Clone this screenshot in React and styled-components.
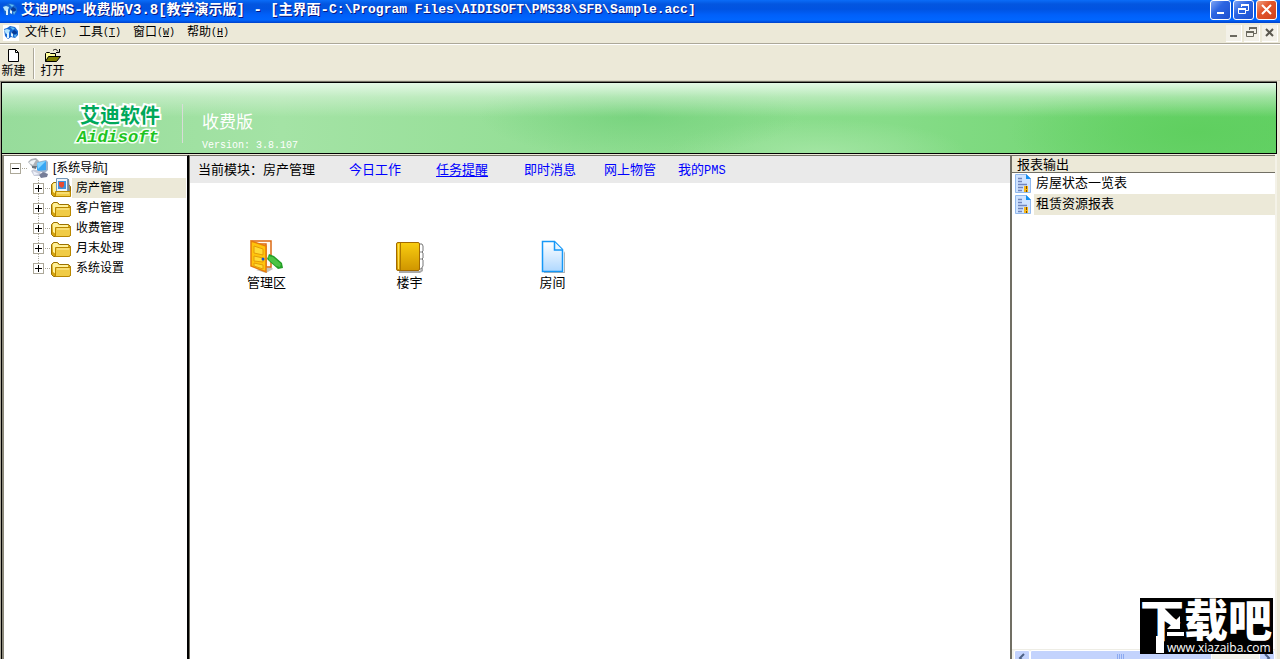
import React from "react";
import styled, { createGlobalStyle } from "styled-components";

const cjk = `"Noto Sans CJK SC", sans-serif`;

const GlobalStyle = createGlobalStyle`
  * { box-sizing: border-box; }
  body {
    margin: 0;
    background: #ece9d8;
    color: #000;
    font: 13px/16px "Liberation Mono", ${cjk};
    overflow: hidden;
  }
  button { font: inherit; color: inherit; border: 0; padding: 0; background: none; white-space: nowrap; }
  ul { list-style: none; margin: 0; padding: 0; }
  svg { display: block; flex: none; }
`;

const Window = styled.div`
  display: flex;
  flex-direction: column;
  height: 100vh;
`;

const TitleBar = styled.header`
  display: flex;
  align-items: center;
  flex: none;
  height: 23px;
  padding: 0 3px 4px 2px;
  background: linear-gradient(#0a6cf8 0, #0356e0 4px, #0053e1 9px, #0060fa 15px, #0066ff 20px, #0040c8 23px);
`;

const Title = styled.h1`
  display: flex;
  flex: 1;
  margin: 0 0 0 3px;
  font-size: 14px;
  line-height: 18px;
  font-weight: 700;
  color: #fff;
  white-space: pre;
  text-shadow: 1px 1px 0 #0a1883;
`;

const FilePath = styled.span`
  font-size: 13px;
`;

const WindowButtons = styled.div`
  display: flex;
  gap: 2px;
`;

const CaptionButton = styled.button`
  display: grid;
  place-items: center;
  width: 21px;
  height: 20px;
  border: 1px solid #fff;
  border-radius: 3px;
  background: ${(p) =>
    p.$close
      ? "linear-gradient(135deg, #f0a080, #e2552c 40%, #d0421c)"
      : "linear-gradient(135deg, #7fa5f5, #2d66e2 40%, #1c50d0)"};
`;

const MdiButton = styled.button`
  display: grid;
  place-items: center;
  width: 16px;
  height: 17px;
  background: #f3f1e8;
  border-right: 1px solid #fff;
  border-bottom: 1px solid #fff;
`;

const MenuBar = styled.nav`
  display: flex;
  align-items: center;
  flex: none;
  height: 21px;
  padding: 0 2px 0 3px;
  border-bottom: 1px solid #aca899;
`;

const MenuItems = styled.div`
  display: flex;
  flex: 1;
  gap: 12px;
  padding-left: 6px;
`;

const MenuButton = styled.button`
  display: flex;
  align-items: center;
  width: 42px;
  font-size: 12px;
`;

const Mnemonic = styled.span`
  font-size: 10px;
`;

const Toolbar = styled.div`
  display: flex;
  flex: none;
  height: 37px;
  padding-top: 3px;
  border-top: 1px solid #fff;
  border-bottom: 1px solid #d8d5c4;
`;

const ToolButton = styled.button`
  display: flex;
  flex-direction: column;
  align-items: center;
  gap: 2px;
  width: 27px;
  height: 32px;
  font-size: 12px;
  line-height: 14px;
`;

const ToolDivider = styled.div`
  width: 2px;
  height: 31px;
  margin: 0 4px 0 6px;
  border-left: 1px solid #aca899;
  border-right: 1px solid #fff;
`;

const Client = styled.div`
  display: flex;
  flex-direction: column;
  flex: 1;
  min-height: 0;
  margin-right: 3px;
  border-top: 1px solid #716f64;
  border-left: 1px solid #aca899;
`;

const Banner = styled.section`
  display: flex;
  align-items: flex-start;
  flex: none;
  height: 72px;
  border: 1px solid #000;
  background:
    linear-gradient(rgba(232, 250, 234, 0.95), rgba(225, 246, 225, 0.5) 14px, rgba(220, 244, 220, 0) 34px),
    radial-gradient(ellipse 190px 60px at 94% 70%, #5fcf5f, rgba(95, 207, 95, 0)),
    radial-gradient(ellipse 160px 44px at 50% 45%, rgba(112, 208, 120, 0.75), rgba(112, 208, 120, 0)),
    radial-gradient(ellipse 150px 34px at 64% 100%, rgba(165, 230, 165, 0.9), rgba(165, 230, 165, 0)),
    linear-gradient(90deg, #97dc9b, #a4e3a5 22%, #92de94 45%, #86dc88 70%, #6fd570 90%, #64d166);
`;

const Brand = styled.div`
  width: 181px;
  height: 39px;
  margin-top: 21px;
  padding-left: 75px;
  border-right: 1px solid #d8dcd8;
  white-space: nowrap;
`;

const BrandName = styled.div`
  padding-left: 3px;
  font: 700 20px/22px ${cjk};
  color: #00a85a;
  -webkit-text-stroke: 4px #fff;
  paint-order: stroke fill;
`;

const BrandLatin = styled.div`
  margin-top: 1px;
  font: italic 700 17px/22px "Liberation Mono", monospace;
  color: #1fc41f;
  -webkit-text-stroke: 3px #f4fff4;
  paint-order: stroke fill;
`;

const Edition = styled.div`
  padding: 27px 0 0 19px;
  color: #fff;
  font: 400 17px/22px ${cjk};
`;

const Version = styled.div`
  margin-top: 8px;
  font: 10px/12px "Liberation Mono", monospace;
`;

const Workspace = styled.div`
  display: flex;
  flex: 1;
  min-height: 0;
  background: #ece9d8;
  border-left: 1px solid #000;
`;

const Panel = styled.div`
  display: flex;
  flex-direction: column;
  min-width: 0;
  margin-top: 1px;
  background: #fff;
  border-top: 1px solid #716f64;
  border-left: 2px solid #716f64;
`;

const TreePanel = styled(Panel)`
  flex: 0 0 187px;
  padding: 2px 1px 0 0;
  border-left-color: #8b887a;
  border-right: 2px solid #000;
`;

const MainPanel = styled(Panel)`
  flex: 1;
  border-left-width: 1px;
`;

const ReportPanel = styled(Panel)`
  flex: 0 0 265px;
`;

const RightEdge = styled.div`
  width: 2px;
  background: #f4f2e8;
`;

const TreeRow = styled.div`
  display: flex;
  align-items: center;
  height: 20px;
  padding-left: ${(p) => p.$indent}px;
`;

const TreeChildren = styled.ul`
  background: repeating-linear-gradient(#aca899 0 1px, #fff 1px 2px) 34px 0 / 1px calc(100% - 12px) no-repeat;
`;

const Expander = styled.button`
  width: 11px;
  height: 11px;
  border: 1px solid #aca899;
  background: #fff;
  display: grid;
  place-items: center;
`;

const Dots = styled.span`
  width: 7px;
  height: 1px;
  background: repeating-linear-gradient(90deg, #fff 0 1px, #aca899 1px 2px);
`;

const TreeLabel = styled.button`
  flex: 1;
  height: 20px;
  padding-left: 4px;
  text-align: left;
  font: 12px/20px "Liberation Sans", ${cjk};
  background: ${(p) => (p.$selected ? "#ece9d8" : "transparent")};
`;

const ModuleBar = styled.nav`
  display: flex;
  align-items: center;
  height: 27px;
  padding: 2px 0 0 8px;
  background: #eaeaea;
  white-space: nowrap;
`;

const ModuleLink = styled.a`
  margin-left: ${(p) => p.$gap}px;
  display: flex;
  align-items: center;
  color: #00f;
  text-decoration: ${(p) => (p.$active ? "underline" : "none")};
  text-underline-offset: 2px;
`;

const Small = styled.span`
  font-size: 12px;
`;

const Shortcuts = styled.div`
  display: grid;
  grid-template-columns: repeat(auto-fill, 143px);
  padding: 57px 0 0 5px;
`;

const Shortcut = styled.button`
  display: flex;
  flex-direction: column;
  align-items: center;
  gap: 2px;
`;

const ReportHeader = styled.h2`
  margin: 0;
  height: 17px;
  padding-left: 5px;
  font: 13px/16px ${cjk};
  background: #ece9d8;
  border-bottom: 1px solid #716f64;
`;

const ReportRow = styled.li`
  display: flex;
  align-items: center;
  height: 21px;
  padding-left: 3px;
  gap: 3px;
`;

const ReportButton = styled.button`
  flex: 1;
  height: 21px;
  padding-left: 2px;
  text-align: left;
  background: ${(p) => (p.$selected ? "#ece9d8" : "transparent")};
`;

const ScrollBar = styled.div`
  display: flex;
  height: 10px;
  margin-top: auto;
  padding-left: 2px;
  overflow: hidden;
  background: #f3f3ec;
  border-top: 1px solid #eeede5;
`;

const ScrollArrow = styled.button`
  width: 16px;
  height: 16px;
  display: grid;
  place-items: center;
  border: 1px solid #fff;
  border-radius: 2px;
  background: #c3d3fd;
`;

const ScrollThumb = styled.div`
  flex: 0 0 182px;
  height: 16px;
  display: grid;
  place-items: center;
  border: 1px solid #fff;
  border-radius: 2px;
  background: #c3d3fd;
`;

const ScrollTrack = styled.div`
  flex: 1;
`;

const WatermarkBox = styled.aside`
  position: fixed;
  right: 7px;
  bottom: 5px;
  width: 133px;
  height: 56px;
  background: #000;
`;

function Globe({ boxed }) {
  return (
    <svg width="16" height="16" viewBox="0 0 16 16" aria-hidden="true">
      {boxed && <rect width="16" height="16" fill="#fff" />}
      <path d="M1 4 4 3l3-2 5 1 3 4v4l-3 3-4-1-3 2-3-3z" fill="#1769d2" />
      <path d="M1 5 4 4l3 1-1 3-3 1-1-2z" fill="#b4e5ff" />
      <path d="M4 8h2v5H4zM8 7l2 1v4L8 11z" fill="#dff4ff" />
      <path d="m8 8 3-3 3 2-1 3-2-1z" fill="#073b96" />
      <path d="m7 2 5 1-2 2z" fill="#62c0f6" />
      <path d="m11 10 3-1-2 4z" fill="#5db4ef" />
    </svg>
  );
}

function WindowGlyph({ kind, color }) {
  return (
    <svg width="13" height="13" viewBox="0 0 13 13" fill="none" stroke={color} aria-hidden="true">
      {kind === "min" && <path d="M3 10h7" strokeWidth="2" />}
      {kind === "restore" && (
        <g>
          <path d="M4.500 4V2.500h7v5H9" />
          <path d="M4 2h8" strokeWidth="2" />
          <path d="M1.500 5.500h7v5h-7z" />
          <path d="M1 6h8" strokeWidth="2" />
        </g>
      )}
      {kind === "close" && <path d="m2 2 9 9M11 2l-9 9" strokeWidth="2" />}
      {kind === "closeSmall" && <path d="m3 3 7 7M10 3l-7 7" strokeWidth="2" />}
    </svg>
  );
}

function NewIcon() {
  return (
    <svg width="16" height="15" viewBox="0 0 16 15" aria-hidden="true">
      <path d="M2.500 1.500h7l3 3v9h-10z" fill="#fff" stroke="#000" />
      <path d="M9.500 1.500v3h3" fill="none" stroke="#000" />
    </svg>
  );
}

function OpenIcon() {
  return (
    <svg width="17" height="15" viewBox="0 0 17 15" aria-hidden="true">
      <path d="M1.500 13.500v-8l1-1h3l1 1h5v3" fill="#ffff9c" stroke="#000" />
      <path d="m1.500 13.500 3-5h12l-4 5z" fill="#808000" stroke="#000" />
      <path d="M9 2.500c2-2 4-1 5 1M15.500 1v3.500H12" fill="none" stroke="#000" />
    </svg>
  );
}

function NetworkIcon() {
  return (
    <svg width="21" height="20" viewBox="0 0 21 20" aria-hidden="true">
      <path d="M0 4 3 1l5-1 3 3v5l-6 2z" fill="#aeb3b9" />
      <path d="M1 5c2-3 4-3 7-3L5 7z" fill="#f1f4f7" />
      <path d="M4 8h5l-1 3-4-1z" fill="#6c747e" />
      <path d="M9 4 18 2l2 2v8l-3 3-8-2z" fill="#9fb2c9" />
      <path d="m9 5 9-2v9l-9 1z" fill="#38a7f4" />
      <path d="m9 5 9-2-8 8z" fill="#85d5ff" />
      <path d="M3 13c3-3 7-1 10 2l-2 3H6z" fill="#c8ccda" />
      <path d="m11 17 4-3 5 2-1 3-6 1z" fill="#777e98" />
      <path d="m5 13 6 3-5 1z" fill="#eff2fb" />
    </svg>
  );
}

function FolderIcon({ photo }) {
  return (
    <svg width="21" height="20" viewBox="0 0 21 20" aria-hidden="true">
      <path d="M.5 6.500 2.500 4.500h4l2 2h9l2 2v9l-2 1h-15l-2-2z" fill="#d5a30d" stroke="#9b7100" />
      <path d="M1.500 6.500 3 5h3l2 2h9v2h-12v7l-3-2z" fill="#fff19a" />
      {photo && (
        <g>
          <path d="M6 1h12l1 12H6z" fill="#7d8793" />
          <path d="M5.500.500h11v13h-11z" fill="#edf5fc" stroke="#7798b9" />
          <path d="M7 3h8v8H7z" fill="#3d91de" />
          <path d="M8 4h5v4l-2 2-3-2z" fill="#e84b31" />
        </g>
      )}
      <path d={photo ? "M4.500 13.500h15v5h-15z" : "M4.500 9.500h15v8l-2 1h-13z"} fill="#f0cb45" stroke="#b98700" />
      <path d={photo ? "M6 15h12" : "M6 11h12"} stroke="#ffef9f" />
    </svg>
  );
}

function DoorIcon() {
  return (
    <svg width="34" height="34" viewBox="0 0 34 34" aria-hidden="true">
      <path d="m6 30 15-3 2 2-7 4z" fill="#c5c2bd" />
      <path d="M2 1h19v26h-5V4H2z" fill="#fff8ef" stroke="#dc6915" strokeWidth="1.500" />
      <path d="m1 1 15 5v26L1 26z" fill="#ffc40b" stroke="#e57b0d" strokeWidth="1.500" />
      <path d="m4 6 9 3v6l-9-2zM4 16l9 2v4l-9-1zM4 23l9 2v4l-9-3z" fill="#ffdb35" stroke="#e49b08" />
      <circle cx="13" cy="19" r="1.500" fill="#1753d2" />
      <path d="m17 19 2-5 5 2 8 7 1 5-5 1-8-7z" fill="#239e27" />
      <path d="m18 16 5 1 8 7-1 3-4-1-7-6z" fill="#4cc445" />
    </svg>
  );
}

function BookIcon() {
  return (
    <svg width="30" height="34" viewBox="0 0 30 34" aria-hidden="true">
      <defs>
        <linearGradient id="cover" x2="0" y2="1">
          <stop stopColor="#f9cd10" />
          <stop offset="1" stopColor="#cf9500" />
        </linearGradient>
      </defs>
      <path d="M4 31h21l3-4v4l-3 2H4z" fill="#aaa" />
      <path d="M23 4h4l1 2v5l-1 1 1 1v5l-1 1 1 1v6l-2 3h-3z" fill="#fff" stroke="#777" />
      <path d="M23 12h4M23 19h4" stroke="#888" />
      <rect x="1.500" y="2.500" width="23" height="28" rx="1.500" fill="url(#cover)" stroke="#a36a00" />
      <path d="M5.500 3v27" stroke="#ad7800" />
      <path d="M3.500 4v25" stroke="#ffdf54" />
    </svg>
  );
}

function PageIcon() {
  return (
    <svg width="26" height="34" viewBox="0 0 26 34" aria-hidden="true">
      <defs>
        <linearGradient id="sheet" x2="0" y2="1">
          <stop stopColor="#fff" />
          <stop offset="1" stopColor="#afd8ff" />
        </linearGradient>
      </defs>
      <path d="M4 32h20V11l1 2v20H4z" fill="#b5b5b5" />
      <path d="M2.500 1.500h12l8 8v22h-20z" fill="url(#sheet)" stroke="#1698f7" strokeWidth="1.500" />
      <path d="M14.500 2v8h8" fill="#e7f5ff" stroke="#1698f7" strokeWidth="1.500" />
    </svg>
  );
}

function ReportIcon() {
  return (
    <svg width="16" height="20" viewBox="0 0 16 20" aria-hidden="true">
      <path d="M.5.500h11l4 4v14H.5z" fill="#cfe3ff" stroke="#91b9ee" />
      <path d="M11 0v5h5z" fill="#1591f2" />
      <path d="M3 4.500h4M3 7.500h4M3 10.500h9M3 13.500h5M3 16.500h4" stroke="#7185bd" strokeWidth="1.500" />
      <path d="M9 12h4v6H9z" fill="#f8b91b" />
      <path d="M11.500 12v3M11.500 16v2" stroke="#784b00" />
    </svg>
  );
}

function Watermark() {
  return (
    <WatermarkBox>
      <svg width="133" height="56" viewBox="0 0 133 56">
        <g fill="#fff">
          <text x="0" y="39" fontSize="44" fontWeight="900" fontFamily='"Noto Sans CJK SC", sans-serif'>
            下载吧
          </text>
          <path d="M16 38h8v17h-8z" />
          <path d="m24 10 12 12 4-4v13H27l4-4-8-12z" />
          <path d="M27 34h17v4H27z" />
          <text x="27" y="54" fontSize="12" fontFamily='"Open Sans", sans-serif'>
            www.xiazaiba.com
          </text>
        </g>
      </svg>
    </WatermarkBox>
  );
}

const menus = [
  ["文件", "F"],
  ["工具", "T"],
  ["窗口", "W"],
  ["帮助", "H"],
];

const modules = ["房产管理", "客户管理", "收费管理", "月末处理", "系统设置"];

const links = [
  { label: "今日工作", gap: 34 },
  { label: "任务提醒", gap: 35, active: true },
  { label: "即时消息", gap: 36 },
  { label: "网上物管", gap: 28 },
  { label: "我的", latin: "PMS", gap: 22 },
];

const shortcuts = [
  ["管理区", DoorIcon],
  ["楼宇", BookIcon],
  ["房间", PageIcon],
];

const reports = ["房屋状态一览表", "租赁资源报表"];

export default function App() {
  return (
    <Window>
      <GlobalStyle />
      <TitleBar>
        <Globe />
        <Title>
          艾迪PMS-收费版V3.8[教学演示版] - [主界面-
          <FilePath>{"C:\\Program Files\\AIDISOFT\\PMS38\\SFB\\Sample.acc]"}</FilePath>
        </Title>
        <WindowButtons>
          <CaptionButton aria-label="最小化"><WindowGlyph kind="min" color="#fff" /></CaptionButton>
          <CaptionButton aria-label="还原"><WindowGlyph kind="restore" color="#fff" /></CaptionButton>
          <CaptionButton $close aria-label="关闭"><WindowGlyph kind="close" color="#fff" /></CaptionButton>
        </WindowButtons>
      </TitleBar>
      <MenuBar>
        <Globe boxed />
        <MenuItems>
          {menus.map(([label, key]) => (
            <MenuButton key={key}>
              {label}
              <Mnemonic>(<u>{key}</u>)</Mnemonic>
            </MenuButton>
          ))}
        </MenuItems>
        <WindowButtons>
          <MdiButton aria-label="最小化窗口"><WindowGlyph kind="min" color="#6b695f" /></MdiButton>
          <MdiButton aria-label="还原窗口"><WindowGlyph kind="restore" color="#6b695f" /></MdiButton>
          <MdiButton aria-label="关闭窗口"><WindowGlyph kind="closeSmall" color="#5a584f" /></MdiButton>
        </WindowButtons>
      </MenuBar>
      <Toolbar>
        <ToolButton><NewIcon />新建</ToolButton>
        <ToolDivider />
        <ToolButton><OpenIcon />打开</ToolButton>
      </Toolbar>
      <Client>
        <Banner>
          <Brand>
            <BrandName>艾迪软件</BrandName>
            <BrandLatin>Aidisoft</BrandLatin>
          </Brand>
          <Edition>
            收费版
            <Version>Version: 3.8.107</Version>
          </Edition>
        </Banner>
        <Workspace>
          <TreePanel as="nav">
            <TreeRow $indent={6}>
              <Expander aria-label="折叠">
                <svg width="9" height="9" stroke="#000"><path d="M1 4.500h7" /></svg>
              </Expander>
              <Dots />
              <NetworkIcon />
              <TreeLabel>[系统导航]</TreeLabel>
            </TreeRow>
            <TreeChildren>
              {modules.map((name, i) => (
                <li key={name}>
                  <TreeRow $indent={29}>
                    <Expander aria-label={"展开" + name}>
                      <svg width="9" height="9" stroke="#000"><path d="M1 4.500h7M4.500 1v7" /></svg>
                    </Expander>
                    <Dots />
                    <FolderIcon photo={i === 0} />
                    <TreeLabel $selected={i === 0}>{name}</TreeLabel>
                  </TreeRow>
                </li>
              ))}
            </TreeChildren>
          </TreePanel>
          <MainPanel as="main">
            <ModuleBar>
              <span>当前模块：房产管理</span>
              {links.map((l) => (
                <ModuleLink key={l.label} href="#" $gap={l.gap} $active={l.active}>
                  {l.label}
                  {l.latin && <Small>{l.latin}</Small>}
                </ModuleLink>
              ))}
            </ModuleBar>
            <Shortcuts>
              {shortcuts.map(([label, Icon]) => (
                <Shortcut key={label}>
                  <Icon />
                  {label}
                </Shortcut>
              ))}
            </Shortcuts>
          </MainPanel>
          <ReportPanel as="section">
            <ReportHeader>报表输出</ReportHeader>
            <ul>
              {reports.map((name, i) => (
                <ReportRow key={name}>
                  <ReportIcon />
                  <ReportButton $selected={i === 1}>{name}</ReportButton>
                </ReportRow>
              ))}
            </ul>
            <ScrollBar>
              <ScrollArrow aria-label="向左滚动">
                <svg width="8" height="10" fill="none" stroke="#4d6185" strokeWidth="2"><path d="M6 1 2 5l4 4" /></svg>
              </ScrollArrow>
              <ScrollThumb>
                <svg width="8" height="8" stroke="#8caaf0"><path d="M.5 0v8M2.500 0v8M4.500 0v8M6.500 0v8" /></svg>
              </ScrollThumb>
              <ScrollTrack />
              <ScrollArrow aria-label="向右滚动">
                <svg width="8" height="10" fill="none" stroke="#4d6185" strokeWidth="2"><path d="m2 1 4 4-4 4" /></svg>
              </ScrollArrow>
            </ScrollBar>
          </ReportPanel>
          <RightEdge />
        </Workspace>
      </Client>
      <Watermark />
    </Window>
  );
}
